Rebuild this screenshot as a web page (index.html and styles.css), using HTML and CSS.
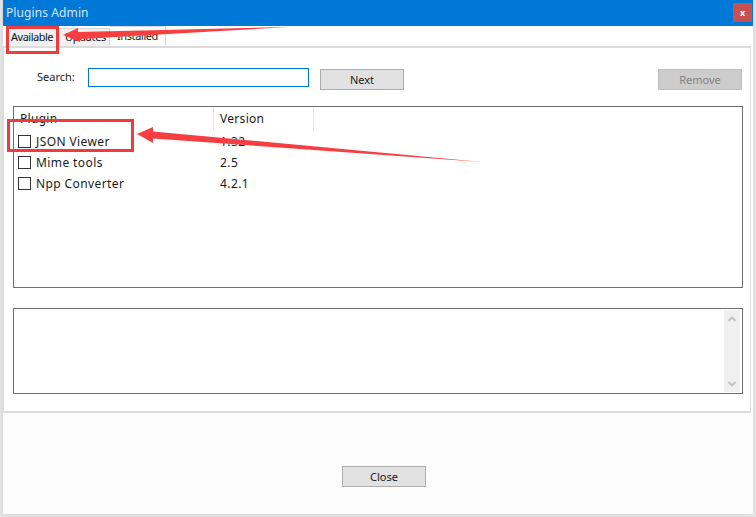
FILE: index.html
```html
<!DOCTYPE html>
<html lang="en">
<head>
<meta charset="utf-8">
<title>Plugins Admin</title>
<link rel="stylesheet" href="styles.css">
</head>
<body>
<div class="window">
  <header class="titlebar">
    <span class="title">Plugins Admin</span>
    <button class="close-x">x</button>
  </header>
  <nav class="tabs">
    <span class="tab tab-available">Available</span>
    <span class="tab tab-updates">Updates</span>
    <span class="tab tab-installed">Installed</span>
  </nav>
  <main class="panel">
    <div class="search-row">
      <label class="search-label">Search:</label>
      <input class="search-input" type="text">
      <button class="btn btn-next">Next</button>
      <button class="btn btn-remove" disabled>Remove</button>
    </div>
    <section class="list">
      <div class="list-head">
        <div class="col-plugin">Plugin</div>
        <div class="col-version">Version</div>
      </div>
      <div class="row"><span class="check"></span><span class="name">JSON Viewer</span><span class="ver">1.32</span></div>
      <div class="row"><span class="check"></span><span class="name">Mime tools</span><span class="ver">2.5</span></div>
      <div class="row"><span class="check"></span><span class="name">Npp Converter</span><span class="ver">4.2.1</span></div>
    </section>
    <section class="desc">
      <div class="scrollbar">
        <svg class="chev" width="8" height="6" viewBox="0 0 8 6"><path d="M0.5 5 L4 1.5 L7.5 5" fill="none" stroke="#c4c4c4" stroke-width="2"/></svg>
        <svg class="chev" width="8" height="6" viewBox="0 0 8 6"><path d="M0.5 1 L4 4.5 L7.5 1" fill="none" stroke="#c4c4c4" stroke-width="2"/></svg>
      </div>
    </section>
  </main>
  <footer class="footer">
    <button class="btn btn-close">Close</button>
  </footer>
</div>
<svg class="annotations" width="756" height="517" viewBox="0 0 756 517">
  <rect x="7.5" y="27.5" width="50" height="25" fill="none" stroke="#ef3b3b" stroke-width="3"/>
  <rect x="8.5" y="120.500" width="124" height="30" fill="none" stroke="#ef3b3b" stroke-width="3"/>
  <path d="M63 35 L78 28 L78 32 L290 27 L80 39 L80 42 Z" fill="#f73f42"/>
  <path d="M137 134 L153 127 L153 131.500 L482 162 L153 138.500 L153 143 Z" fill="#f73f42"/>
</svg>
</body>
</html>
```
FILE: styles.css
```css
* { box-sizing: border-box; }
html, body { margin: 0; padding: 0; }
body {
  width: 756px;
  height: 517px;
  overflow: hidden;
  background: #e4e4e4;
  font-family: "Noto Sans", "Open Sans", sans-serif;
  font-size: 12px;
  color: #1a1a1a;
  position: relative;
}
.window {
  width: 750px;
  height: 514px;
  margin-left: 3px;
  background: #ffffff;
  display: flex;
  flex-direction: column;
  box-shadow: 0 0 3px #cfcfcf;
}
.titlebar {
  height: 26px;
  flex: none;
  background: #0078d7;
  display: flex;
  align-items: flex-start;
  justify-content: space-between;
  padding: 3px 1px 0 3px;
}
.title { color: #d4e6f7; font-size: 12px; line-height: 20px; letter-spacing: 0.1px; }
.close-x {
  width: 19px;
  height: 19px;
  padding: 0;
  border: 0;
  background: #c75050;
  color: #fff;
  font: bold 9px/17px "Noto Sans", sans-serif;
}
.tabs {
  height: 20px;
  flex: none;
  display: flex;
  align-items: flex-end;
  padding-left: 4px;
  font-size: 11px;
  letter-spacing: -0.3px;
}
.tab { display: block; text-align: center; border: 1px solid #d9d9d9; border-bottom: 0; line-height: 16px; }
.tab-available { width: 53px; height: 18px; background: #f0f0f0; color: #111; letter-spacing: -0.5px; padding-right: 3px; }
.tab-updates { width: 50px; height: 18px; background: #f0f0f0; border-left: 0; padding-left: 2px; }
.tab-installed { width: 56px; height: 20px; background: #fff; border-left: 0; line-height: 17px; letter-spacing: -0.4px; }
.panel {
  height: 367px;
  flex: none;
  border: 2px solid #dcdcdc;
  border-left-width: 1px;
  border-right-width: 1px;
  padding: 0 8px 0 9px;
  margin-right: 2px;
  display: flex;
  flex-direction: column;
}
.search-row { display: flex; align-items: flex-start; height: 58px; padding-top: 20px; position: relative; }
.search-label { width: 51px; padding-left: 24px; line-height: 18px; font-size: 11px; white-space: nowrap; }
.search-input {
  width: 221px;
  height: 19px;
  margin: 0 0 0 24px;
  border: 1px solid #0078d7;
  background: #fff;
  outline: 0;
}
.btn {
  width: 84px;
  height: 21px;
  padding: 0;
  border: 1px solid #adadad;
  background: #e1e1e1;
  color: #1a1a1a;
  font: 11px/18px "Noto Sans", sans-serif;
}
.btn-next { margin: 1px 0 0 11px; }
.btn-remove { margin: 1px 0 0 auto; background: #cccccc; border-color: #bfbfbf; color: #838383; }
.list {
  width: 730px;
  height: 182px;
  flex: none;
  border: 1px solid #6e6e6e;
}
.list-head { display: flex; height: 24px; line-height: 23px; letter-spacing: 0.3px; }
.col-plugin { width: 200px; padding-left: 6px; border-right: 1px solid #e5e5e5; }
.col-version { width: 100px; padding-left: 6px; border-right: 1px solid #e5e5e5; }
.row { height: 21px; display: flex; align-items: center; letter-spacing: 0.4px; }
.check { width: 13px; height: 13px; margin-left: 4px; border: 1px solid #333; flex: none; }
.name { width: 184px; margin-left: 5px; white-space: nowrap; }
.desc {
  width: 730px;
  height: 86px;
  flex: none;
  margin-top: 20px;
  border: 1px solid #6e6e6e;
  display: flex;
  justify-content: flex-end;
  padding: 1px 1px 1px 0;
}
.scrollbar {
  width: 16px;
  margin-right: 1px;
  background: #f0f0f0;
  display: flex;
  flex-direction: column;
  justify-content: space-between;
  align-items: center;
  padding: 6px 0 5px;
}
.footer { flex: 1; display: flex; justify-content: center; padding: 53px 0 0 12px; background: #fdfdfd; }
.annotations { position: absolute; left: 0; top: 0; pointer-events: none; }
```
